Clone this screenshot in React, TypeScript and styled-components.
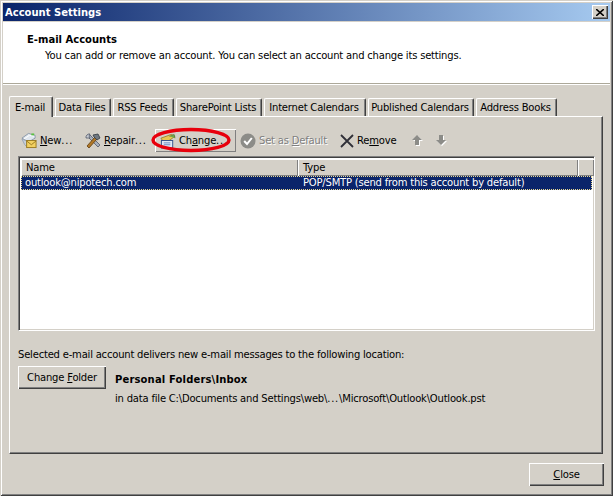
import React from "react";
import styled, { createGlobalStyle } from "styled-components";

const GlobalStyle = createGlobalStyle`
  html, body {
    margin: 0;
    padding: 0;
    background: #d4d0c8;
  }
  body {
    font-family: "DejaVu Sans", Verdana, sans-serif;
    font-size: 10px;
    letter-spacing: -0.2px;
    color: #000;
  }
`;

const raised = `
  box-shadow: inset 1px 1px 0 #fff, inset -1px -1px 0 #404040, inset -2px -2px 0 #808080;
`;

const Window = styled.div`
  width: 613px;
  height: 496px;
  box-sizing: border-box;
  padding: 3px;
  background: #d4d0c8;
  display: flex;
  flex-direction: column;
  box-shadow: inset 1px 1px 0 #d4d0c8, inset -1px -1px 0 #404040, inset 2px 2px 0 #fff, inset -2px -2px 0 #808080;
`;

const TitleBar = styled.div`
  height: 18px;
  margin-bottom: 1px;
  padding: 0 2px 0 2px;
  display: flex;
  align-items: center;
  justify-content: space-between;
  background: linear-gradient(to right, #0a246a, #a6caf0);
  color: #fff;
  font-weight: bold;
  letter-spacing: 0;
`;

const CloseBox = styled.div`
  width: 16px;
  height: 14px;
  background: #d4d0c8;
  display: flex;
  align-items: center;
  justify-content: center;
  ${raised}
`;

const Header = styled.div`
  height: 62px;
  box-sizing: border-box;
  padding: 11px 0 0 24px;
  background: #fff;
  border-bottom: 1px solid #aca899;
  box-shadow: 0 1px 0 #fff;
`;

const HeaderTitle = styled.div`
  font-weight: bold;
  line-height: 13px;
  letter-spacing: 0;
`;

const HeaderText = styled.div`
  margin: 3px 0 0 18px;
  line-height: 13px;
`;

const Body = styled.div`
  flex: 1;
  padding: 12px 6px 0 6px;
  display: flex;
  flex-direction: column;
`;

const TabStrip = styled.div`
  height: 20px;
  display: flex;
  align-items: flex-end;
  padding-left: 1px;
  position: relative;
  z-index: 1;
`;

const Tab = styled.div<{ $active?: boolean; $w: number }>`
  width: ${(p) => p.$w}px;
  height: ${(p) => (p.$active ? 21 : 18)}px;
  box-sizing: border-box;
  margin-right: 2px;
  margin-bottom: ${(p) => (p.$active ? -1 : 0)}px;
  margin-left: ${(p) => (p.$active ? -1 : 0)}px;
  padding-right: 2px;
  display: flex;
  align-items: center;
  justify-content: center;
  background: #d4d0c8;
  border-radius: 2px 2px 0 0;
  border-top: 1px solid #fff;
  border-left: 1px solid #fff;
  border-right: 1px solid #404040;
  box-shadow: inset -1px 0 0 #808080;
`;

const Panel = styled.div`
  width: 594px;
  height: 338px;
  box-sizing: border-box;
  padding: 12px 7px 0 8px;
  border-top: 1px solid #fff;
  border-left: 1px solid #fff;
  border-right: 1px solid #404040;
  border-bottom: 1px solid #404040;
  box-shadow: inset -1px -1px 0 #808080;
`;

const Toolbar = styled.div`
  height: 23px;
  display: flex;
  align-items: center;
  padding-left: 3px;
`;

const ToolItem = styled.div<{ $w: number; $active?: boolean; $disabled?: boolean }>`
  position: relative;
  width: ${(p) => p.$w}px;
  height: 23px;
  box-sizing: border-box;
  flex: none;
  display: flex;
  align-items: center;
  gap: 3px;
  padding-left: ${(p) => (p.$active ? 5 : p.$disabled ? 4 : 0)}px;
  color: ${(p) => (p.$disabled ? "#808080" : "#000")};
  text-shadow: ${(p) => (p.$disabled ? "1px 1px 0 #fff" : "none")};
  ${(p) => (p.$active ? "box-shadow: inset 1px 1px 0 #fff, inset -1px -1px 0 #808080;" : "")}
`;

const Dots = styled.span`
  letter-spacing: 0.8px;
`;

const RedRing = styled.svg`
  position: absolute;
  left: -4px;
  top: -2px;
`;

const ListBox = styled.div`
  margin-top: 4px;
  width: 577px;
  height: 175px;
  box-sizing: border-box;
  background: #fff;
  border-top: 1px solid #808080;
  border-left: 1px solid #808080;
  border-right: 1px solid #fff;
  border-bottom: 1px solid #fff;
  box-shadow: inset 1px 1px 0 #404040, inset -1px -1px 0 #d4d0c8;
  padding: 2px 2px 0 2px;
`;

const HeaderRow = styled.div`
  display: grid;
  grid-template-columns: 277px 280px 16px;
  height: 17px;
`;

const HeaderCell = styled.div`
  box-sizing: border-box;
  padding: 2px 0 0 5px;
  line-height: 14px;
  background: #d4d0c8;
  box-shadow: inset 1px 1px 0 #fff, inset -1px -1px 0 #808080;
`;

const AccountRow = styled.div`
  display: grid;
  grid-template-columns: 278px 279px;
  height: 14px;
  line-height: 13px;
  background: #0a246a;
  color: #fff;
  outline: 1px dotted #e8d890;
  outline-offset: -1px;
`;

const AccountCell = styled.div`
  padding-left: 4px;
`;

const InfoLine = styled.div`
  margin-top: 17px;
  line-height: 13px;
`;

const FolderRow = styled.div`
  margin-top: 5px;
  display: flex;
  gap: 9px;
`;

const DlgButton = styled.div<{ $w: number }>`
  width: ${(p) => p.$w}px;
  height: 23px;
  flex: none;
  display: flex;
  align-items: center;
  justify-content: center;
  background: #d4d0c8;
  ${raised}
`;

const FolderInfo = styled.div`
  padding-top: 7px;
`;

const FolderName = styled.div`
  font-weight: bold;
  line-height: 13px;
  letter-spacing: 0.15px;
`;

const FolderPath = styled.div`
  margin-top: 6px;
  line-height: 13px;
`;

const Footer = styled.div`
  display: flex;
  justify-content: flex-end;
  padding: 9px 0 0 0;
`;

const NewIcon = () => (
  <svg width="16" height="17" viewBox="0 0 17 17">
    <path d="M1 6 L8 1 L15 3 L15 6 L8 10 Z" fill="#dfe6ee" stroke="#8a97a8" />
    <path d="M3 7 L9 3 L14 4" fill="none" stroke="#fff" />
    <path d="M11 2 L14 2" stroke="#58c040" strokeWidth="2" />
    <path d="M1 7 L4 13 L6 15 L6 9 Z" fill="#c8d0dc" stroke="#98a4b4" />
    <rect x="6" y="8.5" width="10" height="7.5" fill="#f2d060" stroke="#9a7a20" />
    <path d="M6 9 L11 13 L16 9" fill="none" stroke="#9a7a20" />
  </svg>
);

const RepairIcon = () => (
  <svg width="16" height="16" viewBox="0 0 16 16">
    <path d="M4 1 L15 12 L13 14 L2 3 Z" fill="#a8b0bc" stroke="#505868" strokeWidth="0.8" />
    <path d="M1 5 A3.5 3.5 0 0 1 5 1 L4 3 L5 5 L3 5 Z" fill="#c8ccd4" stroke="#505868" strokeWidth="0.8" />
    <path d="M2 13 L10 4 L12 6 L4 15 Z" fill="#b07828" stroke="#603c10" strokeWidth="0.8" />
    <path d="M8 2 L13 1 L15 5 L12 7 L9 4 Z" fill="#707880" stroke="#303840" strokeWidth="0.8" />
  </svg>
);

const ChangeIcon = () => (
  <svg width="16" height="16" viewBox="0 0 17 16">
    <path d="M1 5 L12 1 L16 3 L9 8 L3 8 Z" fill="#e8c850" stroke="#8a7020" strokeWidth="0.8" />
    <rect x="1.5" y="7.5" width="12" height="8" fill="#dfe8f4" stroke="#30508a" />
    <path d="M4 10 H11 M4 12 H11" stroke="#6888c0" />
    <path d="M10 3 L15 1 L16 5" fill="#70a850" stroke="#487030" strokeWidth="0.6" />
  </svg>
);

const CheckIcon = () => (
  <svg width="16" height="16" viewBox="0 0 16 16">
    <circle cx="8" cy="8" r="7.5" fill="#8c8c88" />
    <path d="M4.2 8 L7 11 L11.8 5" fill="none" stroke="#fff" strokeWidth="2" />
  </svg>
);

const RemoveIcon = () => (
  <svg width="14" height="14" viewBox="0 0 14 14">
    <path d="M1 1 L13 13 M13 1 L1 13" stroke="#303038" strokeWidth="1.8" />
  </svg>
);

const ArrowIcon = ({ down }: { down?: boolean }) => {
  const d = down ? "M4 1 H8 V6 H11 L6 11 L1 6 H4 Z" : "M6 1 L11 6 H8 V11 H4 V6 H1 Z";
  return (
    <svg width="13" height="13" viewBox="0 0 13 13">
      <path d={d} fill="#fff" transform="translate(1 1)" />
      <path d={d} fill="#8c8c88" />
    </svg>
  );
};

export default function App() {
  return (
    <>
      <GlobalStyle />
      <Window>
        <TitleBar>
          <span>Account Settings</span>
          <CloseBox>
            <svg width="8" height="7" viewBox="0 0 8 7">
              <path d="M0 0 L8 7 M8 0 L0 7" stroke="#000" strokeWidth="1.6" />
            </svg>
          </CloseBox>
        </TitleBar>
        <Header>
          <HeaderTitle>E-mail Accounts</HeaderTitle>
          <HeaderText>
            You can add or remove an account. You can select an account and change its settings.
          </HeaderText>
        </Header>
        <Body>
          <TabStrip>
            <Tab $active $w={44}>E-mail</Tab>
            <Tab $w={56}>Data Files</Tab>
            <Tab $w={61}>RSS Feeds</Tab>
            <Tab $w={86}>SharePoint Lists</Tab>
            <Tab $w={102}>Internet Calendars</Tab>
            <Tab $w={106}>Published Calendars</Tab>
            <Tab $w={81}>Address Books</Tab>
          </TabStrip>
          <Panel>
            <Toolbar>
              <ToolItem $w={64}><NewIcon /><span><u>N</u>ew<Dots>...</Dots></span></ToolItem>
              <ToolItem $w={70}><RepairIcon /><span><u>R</u>epair<Dots>...</Dots></span></ToolItem>
              <ToolItem $w={81} $active>
                <ChangeIcon />
                <span>Ch<u>a</u>nge<Dots>...</Dots></span>
                <RedRing width="81" height="27" viewBox="0 0 81 27">
                  <ellipse cx="40" cy="13" rx="38" ry="10.5" fill="none" stroke="#e8000c" strokeWidth="3.4" />
                </RedRing>
              </ToolItem>
              <ToolItem $w={104} $disabled>
                <CheckIcon /><span>Set as <u>D</u>efault</span>
              </ToolItem>
              <ToolItem $w={71}><RemoveIcon /><span>Re<u>m</u>ove</span></ToolItem>
              <ToolItem $w={24}><ArrowIcon /></ToolItem>
              <ToolItem $w={24}><ArrowIcon down /></ToolItem>
            </Toolbar>
            <ListBox>
              <HeaderRow>
                <HeaderCell>Name</HeaderCell>
                <HeaderCell>Type</HeaderCell>
                <HeaderCell />
              </HeaderRow>
              <AccountRow>
                <AccountCell>outlook@nipotech.com</AccountCell>
                <AccountCell>POP/SMTP (send from this account by default)</AccountCell>
              </AccountRow>
            </ListBox>
            <InfoLine>Selected e-mail account delivers new e-mail messages to the following location:</InfoLine>
            <FolderRow>
              <DlgButton $w={88}><span>Change <u>F</u>older</span></DlgButton>
              <FolderInfo>
                <FolderName>Personal Folders\Inbox</FolderName>
                <FolderPath>in data file C:\Documents and Settings\web\<Dots>...</Dots>\Microsoft\Outlook\Outlook.pst</FolderPath>
              </FolderInfo>
            </FolderRow>
          </Panel>
          <Footer>
            <DlgButton $w={75}><span><u>C</u>lose</span></DlgButton>
          </Footer>
        </Body>
      </Window>
    </>
  );
}
